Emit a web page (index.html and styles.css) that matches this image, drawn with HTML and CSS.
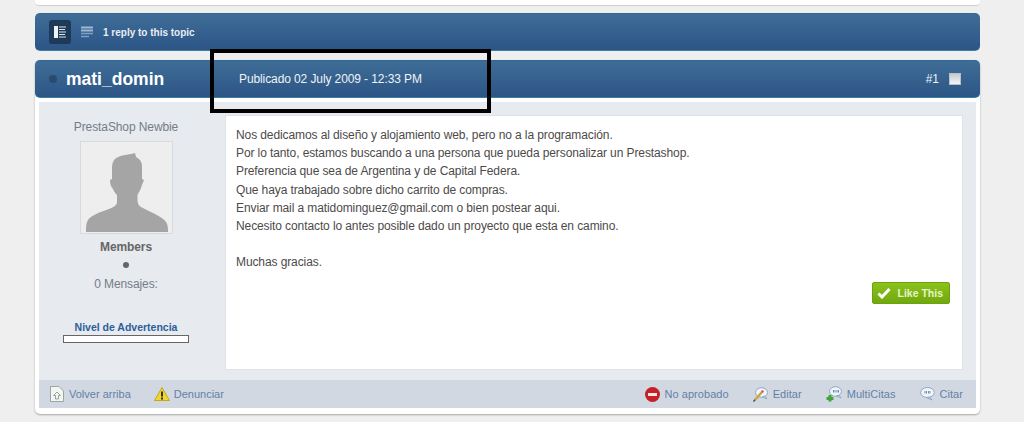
FILE: index.html
```html
<!DOCTYPE html>
<html lang="es">
<head>
    <meta charset="UTF-8">
    <meta name="viewport" content="width=device-width, initial-scale=1.0">
    <title>Prestashop - mati_domin</title>
    <link rel="stylesheet" href="styles.css">
</head>
<body>
    <div class="page">
        <div class="prev-card"></div>

        <div class="bar topic-bar">
            <span class="mod-btn">
                <svg width="12" height="12" viewBox="0 0 12 12">
                    <rect x="0" y="0" width="4" height="12" fill="#eef3f7"/>
                    <path d="M5 1h7M5 3.5h6M5 6h7M5 8.5h6M5 11h7" stroke="#dbe4ec" stroke-width="1.2"/>
                </svg>
            </span>
            <svg class="reply-icon" width="12" height="12" viewBox="0 0 12 12">
                <path d="M0 1.5h12M0 4.5h12" stroke="#9db8d2" stroke-width="2"/>
                <path d="M0 7.5h12M0 10.5h8" stroke="#7fa0c0" stroke-width="1.6"/>
            </svg>
            <span class="reply-count">1 reply to this topic</span>
        </div>

        <div class="post">
            <div class="bar post-head">
                <span class="status-dot"></span>
                <span class="author">mati_domin</span>
                <span class="post-date">Publicado 02 July 2009 - 12:33 PM</span>
                <span class="post-num">#1</span>
                <span class="post-check"></span>
            </div>

            <div class="post-main">
                <div class="author-info">
                    <div class="rank">PrestaShop Newbie</div>
                    <div class="avatar">
                        <svg width="91" height="91" viewBox="0 0 91 91">
                            <path fill="#a5a5a5" d="M54 11C47 13 38 13 34 17C31 20 31 24 31 28V37L29 38C29 42 30 45 32 47C33 50 35 52 36 53V60C36 63 33 65 28 67C19 70 8 74 6 80C5 83 5 86 5 90H87C87 86 87 83 85 80C81 74 67 69 60 65C58 64 57 62 56.5 59V53C58 50 60 47 61 43L63 38L61 37V24C61 20 59 17 55 15Z"/>
                        </svg>
                    </div>
                    <div class="group">Members</div>
                    <span class="pip"></span>
                    <div class="posts">0 Mensajes:</div>
                    <a class="warn-title">Nivel de Advertencia</a>
                    <div class="warn-bar"></div>
                </div>

                <div class="post-body">
                    <p>Nos dedicamos al diseño y alojamiento web, pero no a la programación.</p>
                    <p>Por lo tanto, estamos buscando a una persona que pueda personalizar un Prestashop.</p>
                    <p>Preferencia que sea de Argentina y de Capital Federa.</p>
                    <p>Que haya trabajado sobre dicho carrito de compras.</p>
                    <p>Enviar mail a matidominguez@gmail.com o bien postear aqui.</p>
                    <p>Necesito contacto lo antes posible dado un proyecto que esta en camino.</p>
                    <p>&nbsp;</p>
                    <p>Muchas gracias.</p>
                    <div class="like-row">
                        <span class="like-btn">
                            <svg width="14" height="12" viewBox="0 0 14 12">
                                <path d="M1.5 6.5L5 10L12.5 2" fill="none" stroke="#fff" stroke-width="3"/>
                            </svg>
                            Like This
                        </span>
                    </div>
                </div>
            </div>

            <div class="post-foot">
                <a class="foot-link left-link">
                    <svg width="14" height="16" viewBox="0 0 14 16">
                        <path d="M.5 .5H9L13.5 5V15.5H.5Z" fill="#f2f6f2" stroke="#9aa8a0"/>
                        <path d="M7 6L3.5 9.500H5.5V13H8.5V9.500H10.5Z" fill="none" stroke="#8fa89a"/>
                    </svg>
                    Volver arriba
                </a>
                <a class="foot-link left-link warn-link">
                    <svg width="16" height="14" viewBox="0 0 16 14">
                        <path d="M8 .5L15.5 13.5H.5Z" fill="#efd733" stroke="#c2a81c" stroke-linejoin="round"/>
                        <path d="M8 4.5V9.500M8 10.5V12.5" stroke="#3c3410" stroke-width="2"/>
                    </svg>
                    Denunciar
                </a>
                <span class="foot-gap"></span>
                <a class="foot-link">
                    <svg width="15" height="15" viewBox="0 0 15 15">
                        <circle cx="7.5" cy="7.5" r="7.5" fill="#c42026"/>
                        <rect x="3" y="6" width="9" height="3" fill="#f6e6e6"/>
                    </svg>
                    No aprobado
                </a>
                <a class="foot-link">
                    <svg width="15" height="15" viewBox="0 0 15 15">
                        <ellipse cx="8.5" cy="5.5" rx="6" ry="4.8" fill="#f1f5f9" stroke="#8ba6c4"/>
                        <path d="M12 9L14 12L9.5 10Z" fill="#f1f5f9" stroke="#8ba6c4" stroke-linejoin="round"/>
                        <path d="M9 5L2 13" stroke="#c9a640" stroke-width="2.4"/>
                        <path d="M.5 14.5L2 12.8" stroke="#444" stroke-width="1.4"/>
                        <circle cx="9.5" cy="4.5" r="1.2" fill="#d8504a"/>
                    </svg>
                    Editar
                </a>
                <a class="foot-link">
                    <svg width="16" height="16" viewBox="0 0 16 16">
                        <ellipse cx="9.5" cy="5.5" rx="6" ry="4.8" fill="#f1f5f9" stroke="#8ba6c4"/>
                        <path d="M13 9L15 12L10.5 10Z" fill="#f1f5f9" stroke="#8ba6c4" stroke-linejoin="round"/>
                        <path d="M7.5 4V6.5M9 4V6.5M11 4V6.5M12.5 4V6.5" stroke="#6d8bad"/>
                        <path d="M4 9V15.5M.5 12.5H7.5" stroke="#3fa53a" stroke-width="3"/>
                    </svg>
                    MultiCitas
                </a>
                <a class="foot-link">
                    <svg width="15" height="14" viewBox="0 0 15 14">
                        <ellipse cx="7.5" cy="5.5" rx="6.8" ry="5" fill="#f1f5f9" stroke="#8ba6c4"/>
                        <path d="M9.5 10L12 13L6.5 10.5Z" fill="#f1f5f9" stroke="#8ba6c4" stroke-linejoin="round"/>
                        <path d="M5 4V6.5M6.5 4V6.5M8.5 4V6.5M10 4V6.5" stroke="#6d8bad"/>
                    </svg>
                    Citar
                </a>
            </div>
        </div>
    </div>

    <!-- black box someone drew over the screenshot -->
    <div class="marker-box"></div>
</body>
</html>
```

FILE: styles.css
```css
html, body {
    margin: 0;
    padding: 0;
}
body {
    height: 422px;
    overflow: hidden;
    background-color: #efefef;
    font-family: "Liberation Sans", Arial, sans-serif;
    font-size: 12px;
    color: #4b4b4b;
}
.page {
    width: 945px;
    margin-left: 35px;
}
.prev-card {
    height: 5px;
    background-color: #fff;
    border-bottom: 1px solid #cfcfcf;
    border-radius: 0 0 4px 4px;
    margin-bottom: 7px;
}
.bar {
    display: flex;
    align-items: center;
    height: 38px;
    box-sizing: border-box;
    color: #fff;
    background: linear-gradient(to bottom, #3f6d97, #2c5586);
    border-top: 1px solid #2f6a92;
    border-bottom: 1px solid #3b7fa0;
    border-radius: 5px;
}
.topic-bar {
    margin-bottom: 9px;
    padding-left: 14px;
}
.mod-btn {
    display: flex;
    align-items: center;
    justify-content: center;
    width: 22px;
    height: 24px;
    background-color: #1d3a58;
    border-radius: 3px;
    margin-right: 10px;
}
.reply-icon {
    margin-right: 10px;
}
.reply-count {
    font-size: 10px;
    font-weight: bold;
    color: #e6edf4;
}
.post {
    background-color: #fff;
    border-radius: 5px;
    box-shadow: 0 1px 2px rgba(0,0,0,0.3);
    padding: 0 4px 6px;
    height: 354px;
    box-sizing: border-box;
}
.post-head {
    margin: 0 -4px 4px;
}
.status-dot {
    width: 8px;
    height: 8px;
    border-radius: 50%;
    background-color: #2a4a70;
    margin: 0 9px 0 14px;
}
.author {
    font-size: 17.5px;
    font-weight: bold;
    width: 173px;
}
.post-date {
    font-size: 12px;
    letter-spacing: -0.1px;
    color: #eef3f7;
}
.post-num {
    margin-left: auto;
    margin-right: 10px;
    color: #eef3f7;
}
.post-check {
    width: 10px;
    height: 10px;
    border: 1px solid #b9bfc6;
    background: linear-gradient(to bottom, #c6cbd1, #f4f5f6);
    margin-right: 19px;
}
.post-main {
    display: flex;
    height: 278px;
    padding: 13px 13px 0 0;
    box-sizing: border-box;
    background-color: #e7eaef;
}
.author-info {
    width: 186px;
    flex-shrink: 0;
    box-sizing: border-box;
    padding: 5px 12px 0 0;
    display: flex;
    flex-direction: column;
    align-items: center;
    color: #757d86;
    letter-spacing: -0.1px;
}
.rank {
    line-height: 14px;
    margin-bottom: 7px;
}
.avatar {
    width: 93px;
    height: 93px;
    flex-shrink: 0;
    box-sizing: border-box;
    background-color: #eeeeee;
    border: 1px solid #d8dbde;
}
.avatar svg {
    display: block;
}
.group {
    font-weight: bold;
    color: #666;
    margin-top: 6px;
    line-height: 15px;
}
.pip {
    width: 6px;
    height: 6px;
    border-radius: 50%;
    background-color: #666;
    margin: 7px 0 8px;
}
.posts {
    line-height: 16px;
}
.warn-title {
    font-size: 10.5px;
    font-weight: bold;
    color: #2b609c;
    margin-top: 28px;
    line-height: 14px;
    letter-spacing: 0;
}
.warn-bar {
    width: 126px;
    height: 8px;
    box-sizing: border-box;
    background-color: #fff;
    border: 1px solid #666;
    margin-top: 1px;
}
.post-body {
    flex: 1;
    box-sizing: border-box;
    background-color: #fff;
    border: 1px solid #dfe2e6;
    height: 255px;
    padding: 10px 12px 0 10px;
    color: #4d4a4a;
    letter-spacing: -0.1px;
}
.post-body p {
    margin: 0;
    line-height: 18.2px;
}
.like-row {
    display: flex;
    justify-content: flex-end;
    margin-top: 10px;
}
.like-btn {
    display: flex;
    align-items: center;
    gap: 6px;
    height: 22px;
    padding: 0 6px 0 4px;
    background: linear-gradient(to bottom, #8cc21c, #70a80f);
    border: 1px solid #6aa30c;
    border-radius: 2px;
    box-sizing: border-box;
    color: #e6f5c8;
    font-size: 10.5px;
    font-weight: bold;
    letter-spacing: 0;
}
.post-foot {
    display: flex;
    align-items: center;
    height: 28px;
    background-color: #d1d8e2;
    padding: 0 13px 0 11px;
    gap: 24px;
}
.foot-gap {
    flex: 1;
}
.foot-link {
    display: flex;
    align-items: center;
    gap: 5px;
    font-size: 11px;
    letter-spacing: 0.05px;
    color: #6580a8;
}
.left-link {
    letter-spacing: 0;
}
.warn-link {
    gap: 4px;
    margin-left: -1px;
}
.marker-box {
    position: absolute;
    left: 210px;
    top: 49px;
    width: 281px;
    height: 64px;
    box-sizing: border-box;
    border: 4px solid #000;
}
```
